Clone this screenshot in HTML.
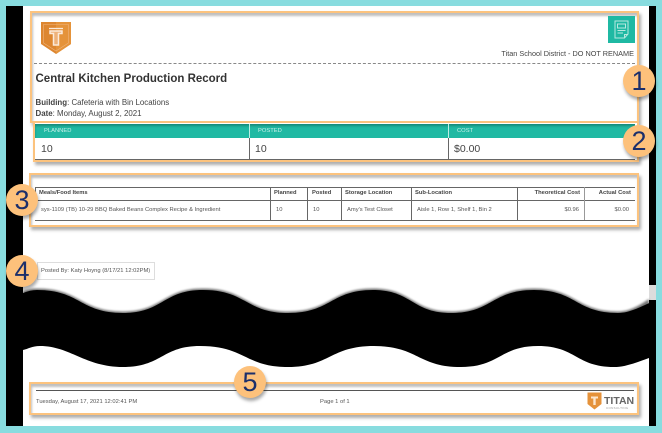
<!DOCTYPE html>
<html><head><meta charset="utf-8"><style>
html,body{margin:0;padding:0}
body{width:662px;height:433px;position:relative;overflow:hidden;background:#88dcdf;font-family:"Liberation Sans",sans-serif;color:#444}
div,span.a,svg{position:absolute}
.t{white-space:nowrap;filter:blur(.35px);line-height:1}
.box{border:2px solid #fcc37e;box-sizing:border-box;box-shadow:2px 3px 3px rgba(0,0,0,.32),inset 1px 3px 2px rgba(0,0,0,.25)}
.c{width:32px;height:32px;border-radius:50%;background:#fdc17b;box-shadow:1px 3px 3px rgba(0,0,0,.35);color:#1c2f6b;font-size:27px;line-height:32px;text-align:center}
.v{background:#666}
.h{background:#666;height:1px}
.th{font-size:5.800px;font-weight:bold;color:#444}
.td{font-size:5.800px;color:#555}
</style></head><body>
<div style="left:6px;top:6px;width:650px;height:420px;background:#fff"></div>
<div style="left:6px;top:6px;width:17px;height:420px;background:#000"></div>
<div style="left:649px;top:6px;width:7px;height:279px;background:#000"></div>
<div style="left:649px;top:285px;width:7px;height:16px;background:#dcdcdc"></div>
<div style="left:649px;top:300px;width:7px;height:126px;background:#000"></div>

<!-- Box 1 -->
<div class="box" style="left:30px;top:11px;width:609px;height:112px;background:#fff"></div>
<svg style="left:40px;top:21px" width="32" height="34" viewBox="0 0 32 34">
<path d="M1 1H31V23L16 33L1 23Z" fill="#dd8630"/><path d="M16 1H31V23L16 33Z" fill="#e5933a"/>
<path d="M3.500 3.500H28.500V22L16 30L3.500 22Z" fill="none" stroke="#efb47c" stroke-width=".6"/>
<path d="M10 10H22V12.500H18.500V24H13.500V12.500H10Z" fill="#eeb27a" stroke="#fbeada" stroke-width="1.500"/>
<path d="M9 7.500H23" stroke="#fbeada" stroke-width="1.300"/>
</svg>
<div style="left:608px;top:16px;width:27px;height:27px;background:#1fb9a3"></div>
<svg style="left:608px;top:16px" width="27" height="27" viewBox="0 0 27 27" fill="none" stroke="#b9e9e0" stroke-width="1">
<path d="M7 5H20V18L16.500 22H7Z"/><path d="M9.500 8H17.500V12H9.500Z"/><path d="M9.500 14.500H17.500M9.500 17H15M16.500 22V18.500H20"/>
</svg>
<div class="t" style="right:28px;top:49.500px;font-size:7.300px">Titan School District - DO NOT RENAME</div>
<div style="left:34px;top:63px;width:601px;border-top:1px dashed #888"></div>
<div class="t" style="left:35.500px;top:73.500px;font-size:11.500px;font-weight:bold;color:#333">Central Kitchen Production Record</div>
<div class="t" style="left:35.500px;top:98.500px;font-size:7.900px"><b>Building</b>: Cafeteria with Bin Locations</div>
<div class="t" style="left:35.500px;top:109.500px;font-size:7.900px"><b>Date</b>: Monday, August 2, 2021</div>

<!-- Box 2 -->
<div class="box" style="left:33px;top:123px;width:606px;height:39px;background:#fff;border-top:0;box-shadow:2px 3px 3px rgba(0,0,0,.32)"></div>
<div style="left:35px;top:124px;width:600px;height:14px;background:#20b9a3;box-shadow:inset 0 2px 2px rgba(0,0,0,.25)"></div>
<div style="left:249px;top:124px;width:1px;height:14px;background:#bfeee6"></div>
<div style="left:448px;top:124px;width:1px;height:14px;background:#bfeee6"></div>
<div style="left:249px;top:138px;width:1px;height:21px;background:#666"></div>
<div style="left:448px;top:138px;width:1px;height:21px;background:#666"></div>
<div class="h" style="left:35px;top:159px;width:600px"></div>
<div class="t" style="left:44px;top:129px;font-size:5.800px;color:#c8f0ea">PLANNED</div>
<div class="t" style="left:258px;top:129px;font-size:5.800px;color:#c8f0ea">POSTED</div>
<div class="t" style="left:457px;top:129px;font-size:5.800px;color:#c8f0ea">COST</div>
<div class="t" style="left:41px;top:144px;font-size:10.500px">10</div>
<div class="t" style="left:255px;top:144px;font-size:10.500px">10</div>
<div class="t" style="left:454px;top:144px;font-size:10.500px">$0.00</div>

<!-- Box 3 -->
<div class="box" style="left:28.500px;top:173px;width:610.500px;height:54px;background:#fff"></div>
<div class="h" style="left:35px;top:187px;width:600px"></div>
<div class="h" style="left:35px;top:200px;width:600px"></div>
<div class="h" style="left:35px;top:220px;width:600px"></div>
<div class="v" style="left:35px;top:187px;width:1px;height:13px"></div>
<div class="v" style="left:270px;top:187px;width:1px;height:33px"></div>
<div class="v" style="left:307px;top:187px;width:1px;height:33px"></div>
<div class="v" style="left:341px;top:187px;width:1px;height:33px"></div>
<div class="v" style="left:411px;top:187px;width:1px;height:33px"></div>
<div class="v" style="left:517px;top:187px;width:1px;height:33px"></div>
<div class="v" style="left:584px;top:187px;width:1px;height:33px;background:#999"></div>
<div class="t th" style="left:39px;top:191px">Meals/Food Items</div>
<div class="t th" style="left:274px;top:191px">Planned</div>
<div class="t th" style="left:312px;top:191px">Posted</div>
<div class="t th" style="left:345px;top:191px">Storage Location</div>
<div class="t th" style="left:415px;top:191px">Sub-Location</div>
<div class="t th" style="right:82px;top:191px">Theoretical Cost</div>
<div class="t th" style="right:31px;top:191px">Actual Cost</div>
<div class="t td" style="left:41px;top:207.500px">sys-1109 (TB) 10-29 BBQ Baked Beans Complex Recipe &amp; Ingredient</div>
<div class="t td" style="left:276px;top:207.500px">10</div>
<div class="t td" style="left:313px;top:207.500px">10</div>
<div class="t td" style="left:347px;top:207.500px">Amy's Test Closet</div>
<div class="t td" style="left:417px;top:207.500px">Aisle 1, Row 1, Shelf 1, Bin 2</div>
<div class="t td" style="right:83px;top:207.500px">$0.96</div>
<div class="t td" style="right:33px;top:207.500px">$0.00</div>

<!-- Box 4 -->
<div style="left:37px;top:262px;width:118px;height:18px;box-sizing:border-box;border:1px solid #ddd;background:#fff"></div>
<div class="t td" style="left:41px;top:268.500px">Posted By: Katy Hoyng (8/17/21 12:02PM)</div>

<!-- Wave -->
<svg style="left:0;top:0" width="662" height="433" viewBox="0 0 662 433">
<defs><filter id="b" x="-5%" y="-20%" width="110%" height="140%"><feGaussianBlur stdDeviation="1"/></filter></defs>
<path filter="url(#b)" opacity=".55" d="M23 291C28 289.500 32 288.500 37 288.500C80 288.500 80 311.500 123 311.500C163 311.500 163 288.500 203 288.500C246 288.500 246 311.500 288 311.500C331 311.500 331 288.500 373 288.500C412 288.500 412 311.500 451 311.500C492 311.500 492 288.500 534 288.500C576 288.500 576 311.500 618 311.500C630 311.500 640 305 649 299V320H23Z" fill="#000"/>
<path d="M23 293C28 291 32 290 37 290C80 290 80 313 123 313C163 313 163 290 203 290C246 290 246 313 288 313C331 313 331 290 373 290C412 290 412 313 451 313C492 313 492 290 534 290C576 290 576 313 618 313C630 313 640 307 656 300V345L649 358C635 363 625 367 614 367C576 367 576 346 538 346C500 346 500 367 461 367C418 367 418 346 374 346C330 346 330 367 288 367C245 367 245 346 200 346C162 346 162 367 123 367C85 367 70 346 40 346C32 346 28 349 23 350Z" fill="#000"/>
</svg>

<!-- Box 5 -->
<div class="box" style="left:29px;top:382px;width:610px;height:33px;background:#fff"></div>
<div style="left:36px;top:389.500px;width:598px;height:1.500px;background:#555"></div>
<div class="t td" style="left:36px;top:400px">Tuesday, August 17, 2021 12:02:41 PM</div>
<div class="t td" style="left:320px;top:400px">Page 1 of 1</div>
<svg style="left:587px;top:392px" width="15" height="18" viewBox="0 0 15 18">
<path d="M.5 .5H14.500V12L7.500 17.500L.5 12Z" fill="#e5923a"/><path d="M4 4.500H11V6.500H8.700V13H6.300V6.500H4Z" fill="#fbe6cf"/>
</svg>
<div class="t" style="left:604px;top:396px;font-size:10.500px;font-weight:bold;color:#666">TITAN</div>
<div class="t" style="left:606px;top:406.500px;font-size:3px;color:#999;letter-spacing:.3px">CONSULTING</div>

<!-- Circles -->
<div class="c" style="left:623px;top:65px">1</div>
<div class="c" style="left:623px;top:125px">2</div>
<div class="c" style="left:6px;top:184px">3</div>
<div class="c" style="left:6px;top:255px">4</div>
<div class="c" style="left:234px;top:366px">5</div>
</body></html>
